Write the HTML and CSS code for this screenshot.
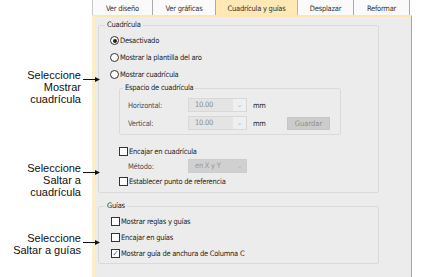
FILE: index.html
```html
<!DOCTYPE html>
<html lang="es">
  <head>
    <meta charset="UTF-8" />
    <meta name="viewport" content="width=device-width, initial-scale=1.0" />
    <title>Cuadrícula y guías</title>
    <link rel="stylesheet" href="styles.css">
  </head>
  <body>
    <div class="page">
      <div class="notes">
        <div class="note note-first">
          <p>Seleccione<br />Mostrar<br />cuadrícula</p>
          <svg class="arrow" width="17" height="7" viewBox="0 0 17 7">
            <line x1="0" y1="3.5" x2="13" y2="3.5" stroke="#111" stroke-width="1" />
            <polygon points="12,1 17,3.5 12,6" fill="#111" />
          </svg>
        </div>
        <div class="note note-second">
          <p>Seleccione<br />Saltar a<br />cuadrícula</p>
          <svg class="arrow" width="17" height="7" viewBox="0 0 17 7">
            <line x1="0" y1="3.5" x2="13" y2="3.5" stroke="#111" stroke-width="1" />
            <polygon points="12,1 17,3.5 12,6" fill="#111" />
          </svg>
        </div>
        <div class="note note-third">
          <p>Seleccione<br />Saltar a guías</p>
          <svg class="arrow" width="17" height="7" viewBox="0 0 17 7">
            <line x1="0" y1="3.5" x2="13" y2="3.5" stroke="#111" stroke-width="1" />
            <polygon points="12,1 17,3.5 12,6" fill="#111" />
          </svg>
        </div>
      </div>

      <div class="dialog">
        <div class="tabs">
          <span class="tab tab-first">Ver diseño</span>
          <span class="tab tab-graphs">Ver gráficas</span>
          <span class="tab tab-active">Cuadrícula y guías</span>
          <span class="tab tab-move">Desplazar</span>
          <span class="tab tab-reshape">Reformar</span>
        </div>

        <div class="panel">
          <fieldset class="group group-grid">
            <legend>Cuadrícula</legend>
            <div class="row radio-row"><span class="radio checked"></span>Desactivado</div>
            <div class="row radio-row"><span class="radio"></span>Mostrar la plantilla del aro</div>
            <div class="row radio-row"><span class="radio"></span>Mostrar cuadrícula</div>

            <fieldset class="group group-space">
              <legend>Espacio de cuadrícula</legend>
              <div class="field-row">
                <span class="field-label">Horizontal:</span>
                <span class="combo"><span class="combo-value">10.00</span><span class="combo-arrow">&#8964;</span></span>
                <span class="unit">mm</span>
              </div>
              <div class="field-row">
                <span class="field-label">Vertical:</span>
                <span class="combo"><span class="combo-value">10.00</span><span class="combo-arrow">&#8964;</span></span>
                <span class="unit">mm</span>
                <button class="btn" disabled>Guardar</button>
              </div>
            </fieldset>

            <div class="row check-row inner snap-row"><span class="check"></span>Encajar en cuadrícula</div>
            <div class="field-row method-row">
              <span class="field-label">Método:</span>
              <span class="combo combo-dark"><span class="combo-value">en X y Y</span><span class="combo-arrow">&#8964;</span></span>
            </div>
            <div class="row check-row inner"><span class="check"></span>Establecer punto de referencia</div>
          </fieldset>

          <fieldset class="group group-guides">
            <legend>Guías</legend>
            <div class="row check-row"><span class="check"></span>Mostrar reglas y guías</div>
            <div class="row check-row"><span class="check"></span>Encajar en guías</div>
            <div class="row check-row"><span class="check checked">&#10003;</span>Mostrar guía de anchura de Columna C</div>
          </fieldset>
        </div>
      </div>
    </div>
  </body>
</html>
```

FILE: styles.css
```css
body {
  margin: 0;
  background-color: #fff;
  font-family: "Liberation Sans", Arial, sans-serif;
}
.page {
  display: flex;
  height: 277px;
  overflow: hidden;
}

/* callouts on the left */
.notes {
  flex: 0 0 92px;
  min-width: 0;
  padding-top: 69px;
  position: relative;
  z-index: 1;
}
.note {
  display: flex;
  align-items: flex-start;
  width: 100px;
}
.note p {
  margin: 0;
  width: 81px;
  text-align: right;
  font-size: 11px;
  line-height: 12px;
  color: #111;
}
.arrow {
  margin-left: 2px;
  margin-top: 7px;
  flex: none;
}
.note-second {
  margin-top: 57px;
}
.note-third {
  margin-top: 34px;
}

/* dialog */
.dialog {
  width: 320px;
  flex: none;
  font-family: "DejaVu Sans Condensed", "DejaVu Sans", sans-serif;
  font-stretch: condensed;
  font-size: 7.5px;
  letter-spacing: -0.25px;
  color: #1e1e1e;
}
.tabs {
  display: flex;
  height: 15px;
}
.tab {
  flex: none;
  box-sizing: border-box;
  height: 15px;
  padding-top: 4px;
  text-align: center;
  background-color: #fafafa;
  border-right: 1px solid #a9a9a9;
  color: #333;
}
.tab-first {
  width: 61px;
  border-left: 1px solid #c9c9c9;
}
.tab-graphs {
  width: 63px;
}
.tab-active {
  width: 82px;
  background-color: #fde8b6;
  border-right-color: #c9b58a;
}
.tab-move {
  width: 56px;
}
.tab-reshape {
  width: 56px;
}
.panel {
  height: 262px;
  box-sizing: border-box;
  background-color: #ececec;
  border-top: 2px solid #fce7b3;
  border-left: 3px solid #fcefc8;
  border-right: 1px solid #c4a46a;
  padding-top: 3px;
}

/* group boxes */
.group {
  margin: 0;
  padding: 0;
  border: 1px solid #dadada;
  border-radius: 2px;
  min-width: 0;
}
.group legend {
  padding: 0 2px;
  margin-left: 6px;
  line-height: 10px;
  color: #222;
}
.group-grid {
  width: 281px;
  box-sizing: border-box;
  margin-left: 3px;
  padding-top: 2px;
  padding-bottom: 3px;
}
.group-space {
  width: 222px;
  box-sizing: border-box;
  margin-left: 20px;
  padding-top: 3px;
  padding-bottom: 2px;
}
.group-space legend {
  margin-left: 3px;
}
.group-guides {
  width: 281px;
  box-sizing: border-box;
  margin-left: 3px;
  margin-top: 8px;
  padding-top: 2px;
  padding-bottom: 2px;
}

/* rows */
.row {
  display: flex;
  align-items: center;
  height: 16px;
}
.radio-row {
  height: 17px;
  margin-left: 11px;
}
.check-row {
  margin-left: 12px;
}
.check-row.inner {
  margin-left: 20px;
}
.snap-row {
  margin-top: 8px;
}
.radio {
  box-sizing: border-box;
  width: 9px;
  height: 9px;
  border: 1px solid #333;
  border-radius: 50%;
  background-color: #fff;
  margin-right: 1px;
  position: relative;
}
.radio.checked::after {
  content: "";
  position: absolute;
  left: 1.5px;
  top: 1.5px;
  width: 4px;
  height: 4px;
  border-radius: 50%;
  background-color: #222;
}
.check {
  box-sizing: border-box;
  width: 9px;
  height: 9px;
  border: 1px solid #333;
  background-color: #fff;
  margin-right: 1px;
  font-size: 8px;
  line-height: 7px;
  text-align: center;
  color: #555;
}

/* labelled fields */
.field-row {
  display: flex;
  align-items: center;
  height: 18px;
  padding-left: 8px;
}
.method-row {
  height: 14px;
  padding-left: 29px;
}
.field-label {
  width: 60px;
  color: #505050;
}
.combo {
  display: flex;
  align-items: center;
  box-sizing: border-box;
  width: 59px;
  height: 14px;
  border: 1px solid #d8d8d8;
  background-color: #efefef;
  color: #8c8c8c;
}
.combo-value {
  flex: 1;
  height: 100%;
  padding-left: 6px;
  line-height: 12px;
  background-color: #e4e4e4;
}
.combo-arrow {
  width: 13px;
  text-align: center;
  color: #b3b3b3;
  font-size: 7px;
  line-height: 6px;
}
.combo-dark {
  border-color: #cdcdcd;
  background-color: #d0d0d0;
  color: #9a9a9a;
}
.combo-dark .combo-value {
  background-color: #d0d0d0;
}
.unit {
  width: 34px;
  margin-left: 6px;
}
.btn {
  width: 43px;
  height: 13px;
  padding: 0;
  border: 1px solid #c6c6c6;
  background-color: #cccccc;
  color: #8f8f8f;
  font: inherit;
}
```
